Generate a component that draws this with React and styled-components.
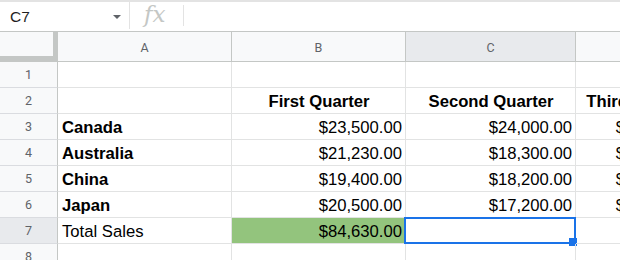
import React from "react";
import styled, { createGlobalStyle, css } from "styled-components";

const Global = createGlobalStyle`
  html, body { margin: 0; padding: 0; background: #fff; overflow: hidden; }
  body { font-family: "Liberation Sans", Arial, sans-serif; }
`;

const Page = styled.div`
  width: 620px;
  height: 260px;
  overflow: hidden;
  background: #fff;
`;

const FormulaBar = styled.div`
  display: flex;
  align-items: center;
  height: 32px;
  box-sizing: border-box;
  border-bottom: 1px solid #c4c7c5;
  box-shadow: inset 0 2px 0 #e3e3e3;
`;

const NameBox = styled.div`
  display: flex;
  align-items: center;
  justify-content: space-between;
  width: 129px;
  box-sizing: border-box;
  padding: 2px 8px 0 10px;
  font-size: 15.5px;
  color: #1f1f1f;
`;

const Caret = styled.span`
  width: 0;
  height: 0;
  border-left: 4px solid transparent;
  border-right: 4px solid transparent;
  border-top: 4px solid #5f6368;
  margin-top: 1px;
`;

const Divider = styled.div`
  width: 1px;
  align-self: ${(p) => (p.$tall ? "stretch" : "center")};
  height: ${(p) => (p.$tall ? "auto" : "21px")};
  margin: ${(p) => (p.$tall ? "2px 0 2px" : "0")};
  background: #e3e3e3;
`;

const Fx = styled.div`
  width: 53px;
  box-sizing: border-box;
  padding-left: 14px;
  font-family: "DejaVu Serif", "Liberation Serif", serif;
  font-style: italic;
  font-size: 23px;
  color: #c4c7c5;
  line-height: 1;
  margin-top: -3px;
`;

const Grid = styled.div`
  display: grid;
  grid-template-columns: 58px 174px 174px 170px 127px;
  grid-auto-rows: 26px;
  grid-template-rows: 30px;
  width: 703px;
`;

const headerBase = css`
  box-sizing: border-box;
  display: flex;
  align-items: center;
  justify-content: center;
  font-family: Roboto, "Liberation Sans", sans-serif;
  font-size: 12.5px;
  color: #5f6368;
  background: ${(p) => (p.$active ? "#e8eaed" : "#f8f9fa")};
`;

const Corner = styled.div`
  ${headerBase};
  border-right: 1px solid #c4c7c5;
  border-bottom: 1px solid #c4c7c5;
  box-shadow: inset -4px -5px 0 #c4c7c5;
`;

const ColHead = styled.div`
  ${headerBase};
  border-right: 1px solid #c4c7c5;
  border-bottom: 1px solid #c4c7c5;
  padding-top: 1px;
`;

const RowHead = styled.div`
  ${headerBase};
  border-right: 1px solid #c4c7c5;
  border-bottom: 1px solid #dadce0;
`;

const Cell = styled.div`
  position: relative;
  box-sizing: border-box;
  display: flex;
  align-items: flex-end;
  justify-content: ${(p) =>
    p.$align === "right" ? "flex-end" : p.$align === "center" ? "center" : "flex-start"};
  padding: 0 3px 1px 4px;
  border-right: 1px solid #e2e3e3;
  border-bottom: 1px solid #e2e3e3;
  font-size: 16.67px;
  font-weight: ${(p) => (p.$bold ? 700 : 400)};
  color: #000;
  white-space: nowrap;
  background: ${(p) => p.$bg || "transparent"};
`;

const Selection = styled.div`
  position: absolute;
  left: -2px;
  top: -1px;
  right: -1px;
  bottom: -1px;
  border: 2px solid #1a73e8;
  pointer-events: none;
`;

const Handle = styled.div`
  position: absolute;
  right: -3px;
  bottom: -4px;
  width: 8px;
  height: 8px;
  background: #1a73e8;
`;

const cols = ["A", "B", "C", "D"];

const rows = [
  { n: 1, cells: [{}, {}, {}, {}] },
  {
    n: 2,
    cells: [
      {},
      { t: "First Quarter", b: true, a: "center" },
      { t: "Second Quarter", b: true, a: "center" },
      { t: "Third Quarter", b: true, a: "center" },
    ],
  },
  {
    n: 3,
    cells: [
      { t: "Canada", b: true },
      { t: "$23,500.00", a: "right" },
      { t: "$24,000.00", a: "right" },
      { t: "$22,500.00", a: "right" },
    ],
  },
  {
    n: 4,
    cells: [
      { t: "Australia", b: true },
      { t: "$21,230.00", a: "right" },
      { t: "$18,300.00", a: "right" },
      { t: "$19,600.00", a: "right" },
    ],
  },
  {
    n: 5,
    cells: [
      { t: "China", b: true },
      { t: "$19,400.00", a: "right" },
      { t: "$18,200.00", a: "right" },
      { t: "$17,900.00", a: "right" },
    ],
  },
  {
    n: 6,
    cells: [
      { t: "Japan", b: true },
      { t: "$20,500.00", a: "right" },
      { t: "$17,200.00", a: "right" },
      { t: "$18,100.00", a: "right" },
    ],
  },
  {
    n: 7,
    active: true,
    cells: [
      { t: "Total Sales" },
      { t: "$84,630.00", a: "right", bg: "#93c47d" },
      { sel: true },
      {},
    ],
  },
  { n: 8, cells: [{}, {}, {}, {}] },
];

export default function App() {
  return (
    <Page>
      <Global />
      <FormulaBar>
        <NameBox>
          <span>C7</span>
          <Caret />
        </NameBox>
        <Divider $tall />
        <Fx>fx</Fx>
        <Divider />
      </FormulaBar>
      <Grid>
        <Corner />
        {cols.map((c) => (
          <ColHead key={c} $active={c === "C"}>
            {c}
          </ColHead>
        ))}
        {rows.map((r) => (
          <React.Fragment key={r.n}>
            <RowHead $active={r.active}>{r.n}</RowHead>
            {r.cells.map((c, i) => (
              <Cell key={i} $bold={c.b} $align={c.a} $bg={c.bg}>
                {c.t}
                {c.sel && (
                  <Selection>
                    <Handle />
                  </Selection>
                )}
              </Cell>
            ))}
          </React.Fragment>
        ))}
      </Grid>
    </Page>
  );
}
